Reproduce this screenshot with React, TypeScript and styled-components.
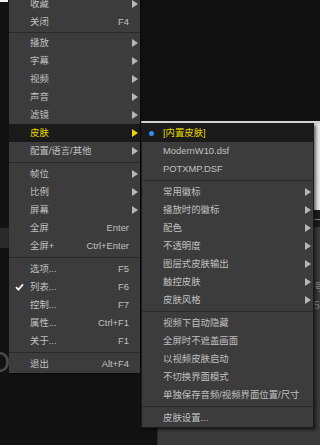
import React from 'react';
import styled, { createGlobalStyle } from 'styled-components';

/* 전역 스타일 */
const GlobalStyle = createGlobalStyle`
  html, body {
    margin: 0;
    padding: 0;
    background: #121212;
  }
`;

/* 메뉴 데이터 */
type Entry =
  | { kind: 'sep'; space?: number }
  | {
      kind: 'item';
      label: string;
      shortcut?: string;
      sub?: boolean;
      active?: boolean;
      mark?: 'check' | 'dot';
    };

const MAIN_MENU: Entry[] = [
  { kind: 'item', label: '收藏', sub: true },
  { kind: 'item', label: '关闭', shortcut: 'F4' },
  { kind: 'sep', space: 3 },
  { kind: 'item', label: '播放', sub: true },
  { kind: 'item', label: '字幕', sub: true },
  { kind: 'item', label: '视频', sub: true },
  { kind: 'item', label: '声音', sub: true },
  { kind: 'item', label: '滤镜', sub: true },
  { kind: 'item', label: '皮肤', sub: true, active: true },
  { kind: 'item', label: '配置/语言/其他', sub: true },
  { kind: 'sep' },
  { kind: 'item', label: '帧位', sub: true },
  { kind: 'item', label: '比例', sub: true },
  { kind: 'item', label: '屏幕', sub: true },
  { kind: 'item', label: '全屏', shortcut: 'Enter' },
  { kind: 'item', label: '全屏+', shortcut: 'Ctrl+Enter' },
  { kind: 'sep' },
  { kind: 'item', label: '选项...', shortcut: 'F5' },
  { kind: 'item', label: '列表...', shortcut: 'F6', mark: 'check' },
  { kind: 'item', label: '控制...', shortcut: 'F7' },
  { kind: 'item', label: '属性...', shortcut: 'Ctrl+F1' },
  { kind: 'item', label: '关于...', shortcut: 'F1' },
  { kind: 'sep' },
  { kind: 'item', label: '退出', shortcut: 'Alt+F4' },
];

const SKIN_MENU: Entry[] = [
  { kind: 'item', label: '[内置皮肤]', active: true, mark: 'dot' },
  { kind: 'item', label: 'ModernW10.dsf' },
  { kind: 'item', label: 'POTXMP.DSF' },
  { kind: 'sep' },
  { kind: 'item', label: '常用徽标', sub: true },
  { kind: 'item', label: '播放时的徽标', sub: true },
  { kind: 'item', label: '配色', sub: true },
  { kind: 'item', label: '不透明度', sub: true },
  { kind: 'item', label: '图层式皮肤输出', sub: true },
  { kind: 'item', label: '触控皮肤', sub: true },
  { kind: 'item', label: '皮肤风格', sub: true },
  { kind: 'sep' },
  { kind: 'item', label: '视频下自动隐藏' },
  { kind: 'item', label: '全屏时不遮盖画面' },
  { kind: 'item', label: '以视频皮肤启动' },
  { kind: 'item', label: '不切换界面模式' },
  { kind: 'item', label: '单独保存音频/视频界面位置/尺寸' },
  { kind: 'sep' },
  { kind: 'item', label: '皮肤设置...' },
];

/* 아이콘 */
const Arrow = ({ color }: { color: string }) => (
  <svg width="6" height="8" viewBox="0 0 6 8">
    <path d="M0 0 L6 4 L0 8 Z" fill={color} />
  </svg>
);

const Check = () => (
  <svg width="9" height="8" viewBox="0 0 9 8">
    <path d="M1 4.2 L3.4 6.6 L8 1.4" fill="none" stroke="#f2f2f2" strokeWidth="1.8" />
  </svg>
);

/* MenuList 컴포넌트 */
const MenuList = ({ entries }: { entries: Entry[] }) => (
  <>
    {entries.map((e, i) =>
      e.kind === 'sep' ? (
        <Separator key={i} $space={e.space ?? 5} />
      ) : (
        <MenuRow key={i} $active={!!e.active}>
          <Gutter>
            {e.mark === 'check' && <Check />}
            {e.mark === 'dot' && <Dot />}
          </Gutter>
          <Label>{e.label}</Label>
          <Shortcut>{e.shortcut}</Shortcut>
          <ArrowCell>{e.sub && <Arrow color={e.active ? '#ecd800' : '#b4b8bd'} />}</ArrowCell>
        </MenuRow>
      ),
    )}
  </>
);

const App = () => (
  <>
    <GlobalStyle />
    <Desktop>
      <TopChip />
      <SideBand />
      <SideGlyph>O</SideGlyph>
      <WindowEdge />
      <BackWindow>
        <WindowSheet />
        <WindowBar>
          <BarTick />
        </WindowBar>
        <WindowBody>
          <Fragment $top={52}>号</Fragment>
          <Fragment $top={73}>5</Fragment>
        </WindowBody>
      </BackWindow>

      <MenuStack>
        <MainMenu>
          <MenuList entries={MAIN_MENU} />
        </MainMenu>
        <SubMenu>
          <MenuList entries={SKIN_MENU} />
        </SubMenu>
      </MenuStack>
    </Desktop>
  </>
);

export default App;

/* Desktop 컴포넌트 */
const Desktop = styled.div`
  position: relative;
  width: 320px;
  height: 445px;
  overflow: hidden;
  background: #121212;
  font-family: 'Liberation Sans', 'Noto Sans CJK SC', sans-serif;
  font-size: 9.4px;
`;

/* 배경 조각들 */
const TopChip = styled.div`
  position: absolute;
  left: 0;
  top: 0;
  width: 8px;
  height: 2px;
  background: #f0f0f0;
`;

const SideBand = styled.div`
  position: absolute;
  left: 0;
  top: 228px;
  width: 20px;
  height: 20px;
  background: #2a2a2a;
`;

const SideGlyph = styled.div`
  position: absolute;
  left: -13px;
  top: 345px;
  font-size: 30px;
  line-height: 34px;
  color: #4a4a4a;
`;

const WindowEdge = styled.div`
  position: absolute;
  left: 141px;
  top: 121px;
  right: 0;
  height: 3px;
  background: #d6d6d6;
`;

const BackWindow = styled.div`
  position: absolute;
  left: 157px;
  top: 124px;
  right: 0;
  bottom: 0;
  display: flex;
  flex-direction: column;
  background: #3b3b3b;
  border-left: 1px solid #2a2a2a;
`;

const WindowSheet = styled.div`
  height: 86px;
  background: #e4e4e4;
`;

const WindowBar = styled.div`
  position: relative;
  height: 17px;
  background: #1c1c1c;
`;

const BarTick = styled.div`
  position: absolute;
  right: 0;
  top: 9px;
  width: 6px;
  height: 1px;
  background: #8a8a8a;
`;

const WindowBody = styled.div`
  position: relative;
  flex: 1;
`;

const Fragment = styled.span<{ $top: number }>`
  position: absolute;
  left: 156px;
  top: ${(p) => p.$top}px;
  font-size: 10px;
  color: #8c8c8c;
`;

/* MenuStack 컴포넌트 */
const MenuStack = styled.div`
  position: relative;
  display: flex;
  align-items: flex-start;
  gap: 1px;
  padding-left: 9px;
`;

const MainMenu = styled.div`
  width: 131px;
  margin-top: -5px;
  background: #3c3c3c;
  box-shadow: 1px 1px 2px rgba(0, 0, 0, 0.6);
`;

const SubMenu = styled.div`
  width: 171px;
  margin-top: 123px;
  background: #3c3c3c;
  border: 1px solid #1b1b1b;
  box-shadow: 2px 2px 3px rgba(0, 0, 0, 0.55);
`;

/* MenuRow 컴포넌트 */
const MenuRow = styled.div<{ $active: boolean }>`
  display: grid;
  grid-template-columns: 21px 1fr auto 11px;
  align-items: center;
  height: 18px;
  line-height: 18px;
  white-space: nowrap;
  background: ${(p) => (p.$active ? '#1a1a1a' : 'transparent')};
  color: ${(p) => (p.$active ? '#ecd800' : '#c0c0c0')};
`;

const Gutter = styled.div`
  display: flex;
  align-items: center;
  justify-content: center;
  height: 100%;
`;

const Dot = styled.span`
  width: 5px;
  height: 5px;
  margin-right: 3px;
  border-radius: 50%;
  background: #2f8cf6;
`;

const Label = styled.span`
  overflow: hidden;
`;

const Shortcut = styled.span`
  color: #c0c0c0;
`;

const ArrowCell = styled.div`
  display: flex;
  align-items: center;
  justify-content: center;
  height: 100%;
`;

/* Separator 컴포넌트 */
const Separator = styled.div<{ $space: number }>`
  display: flex;
  align-items: center;
  height: ${(p) => p.$space}px;

  &::before {
    content: '';
    flex: 1;
    height: 1px;
    background: #2a2a2a;
  }
`;
